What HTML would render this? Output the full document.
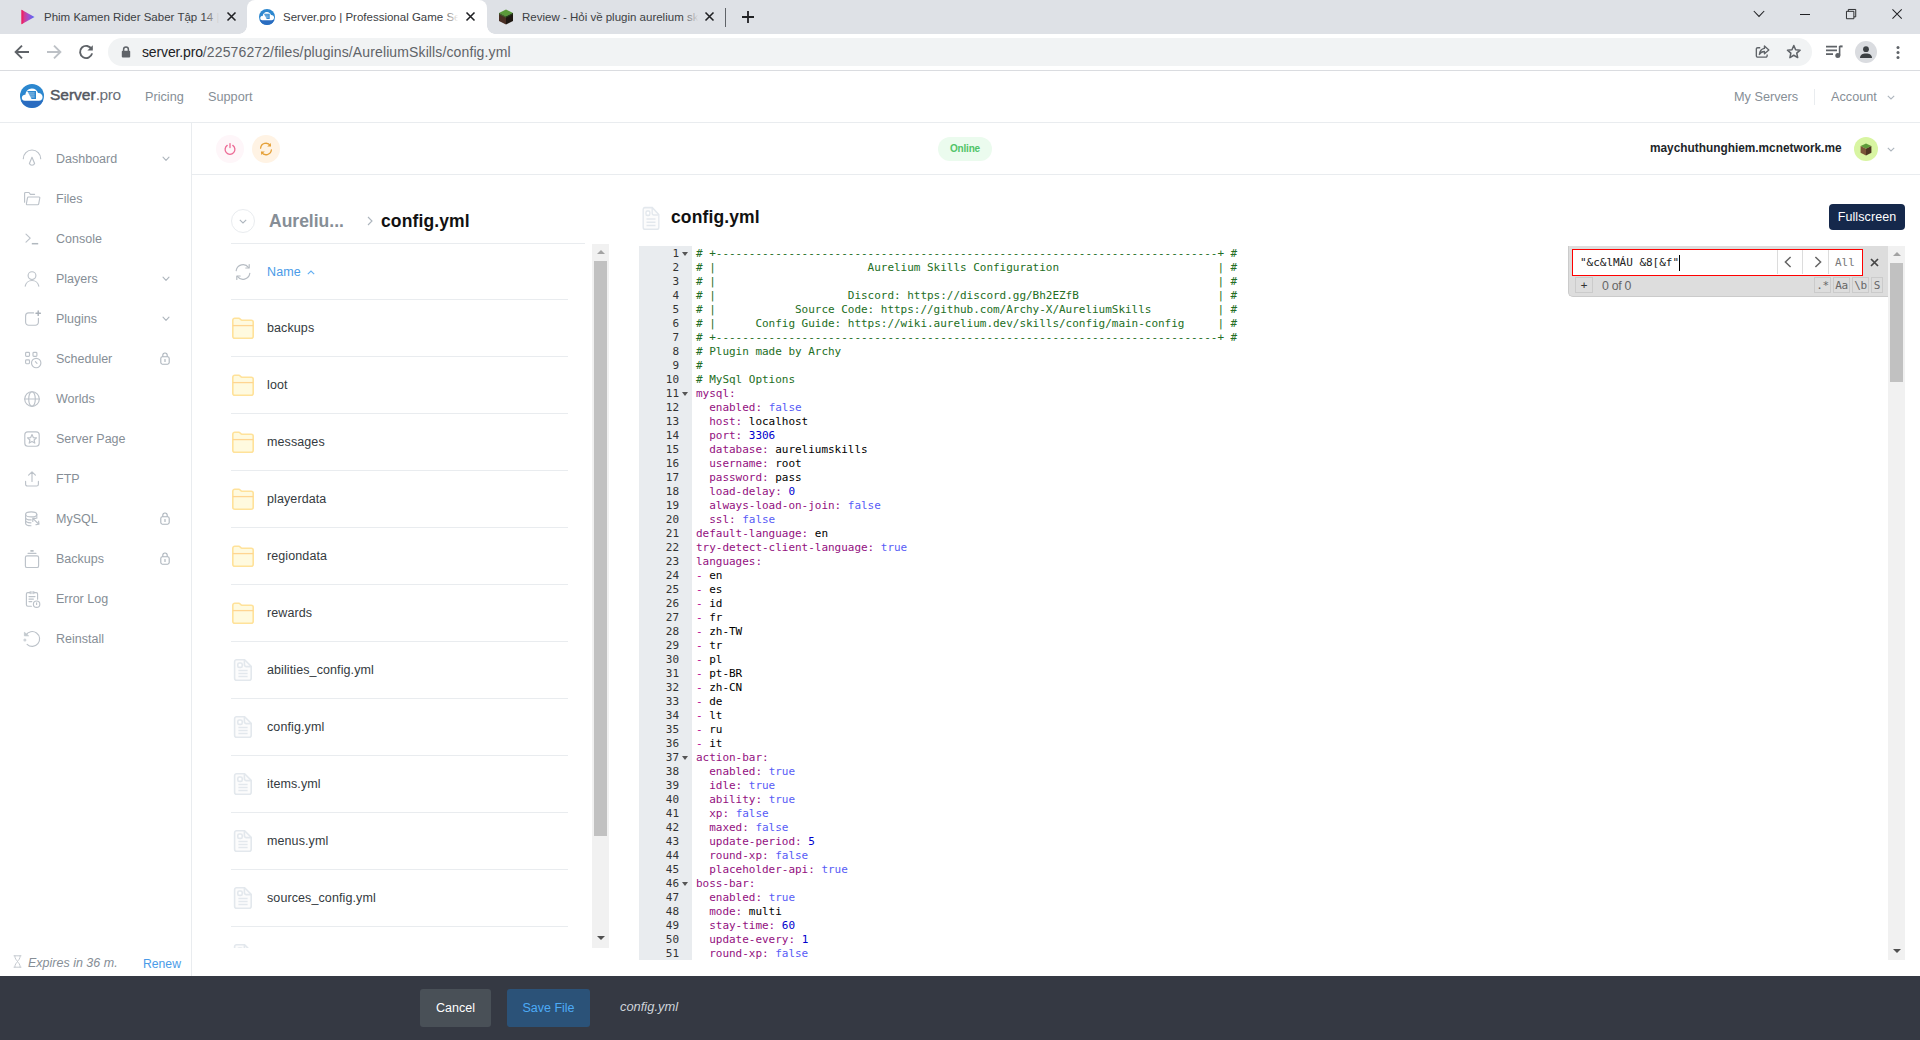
<!DOCTYPE html>
<html lang="en">
<head>
<meta charset="utf-8">
<title>Server.pro | Professional Game Server Hosting</title>
<style>
*{box-sizing:border-box;margin:0;padding:0}
html,body{width:1920px;height:1040px;overflow:hidden;background:#fff;font-family:"Liberation Sans",Arial,sans-serif;color:#212529}
.abs{position:absolute}
svg{display:block;overflow:visible}
/* ---------- browser chrome ---------- */
#tabstrip{position:absolute;left:0;top:0;width:1920px;height:34px;background:#dee1e6}
.tab{position:absolute;top:0;height:34px;font-size:11.5px;color:#3c4043;white-space:nowrap}
.tab .ttl{position:absolute;top:9px;height:16px;line-height:16px;overflow:hidden}
.tab .x{position:absolute;top:11px;width:11px;height:11px}
#tab2{left:247px;width:240px;background:#fff;border-radius:8px 8px 0 0}
#tab2:before,#tab2:after{content:"";position:absolute;bottom:0;width:8px;height:8px;background:radial-gradient(circle at 0 0,rgba(255,255,255,0) 7.5px,#fff 8px)}
#tab2:before{left:-8px}
#tab2:after{right:-8px;background:radial-gradient(circle at 100% 0,rgba(255,255,255,0) 7.5px,#fff 8px)}
.fade{position:absolute;top:6px;width:28px;height:22px}
#toolbar{position:absolute;left:0;top:34px;width:1920px;height:37px;background:#fff;border-bottom:1px solid #dadce0}
#omni{position:absolute;left:108px;top:4px;width:1704px;height:28px;border-radius:14px;background:#f1f3f4}
#url{position:absolute;left:34px;top:5px;font-size:14px;line-height:18px;color:#5f6368;letter-spacing:.12px;white-space:nowrap}
#url b{font-weight:400;color:#202124;letter-spacing:-.14px}
/* ---------- site header ---------- */
#hdr{position:absolute;left:0;top:71px;width:1920px;height:52px;background:#fff;border-bottom:1px solid #e9ecef}
.nav{position:absolute;top:18px;font-size:12.7px;line-height:16px;color:#868e96;white-space:nowrap}
/* ---------- sidebar ---------- */
#side{position:absolute;left:0;top:123px;width:192px;height:853px;border-right:1px solid #e9ecef;background:#fff}
.si{position:absolute;left:0;width:191px;height:40px}
.si .ic{position:absolute;left:22px;top:10px;width:20px;height:20px}
.si .tx{position:absolute;left:56px;top:11px;font-size:12.5px;line-height:18px;color:#868e96;white-space:nowrap}
.si .ch{position:absolute;left:162px;top:17px;width:8px;height:6px}
.si .lk{position:absolute;left:160px;top:13px;width:10px;height:13px}
/* ---------- server bar ---------- */
#sbar{position:absolute;left:192px;top:123px;width:1728px;height:52px;border-bottom:1px solid #e9ecef;background:#fff}
/* ---------- file list ---------- */
#fl{position:absolute;left:231px;top:244px;width:378px;height:704px;overflow:hidden}
.row{position:absolute;left:0;width:337px;height:57px;border-bottom:1px solid #e9ecef}
.row .fi{position:absolute;left:0;top:16px;width:24px;height:24px}
.row .nm{position:absolute;left:36px;top:19px;font-size:12.5px;line-height:18px;color:#343a40;white-space:nowrap;letter-spacing:.1px}
/* ---------- editor ---------- */
#ed{position:absolute;left:639px;top:246px;width:1266px;height:714px;background:#fff;overflow:hidden}
#gut{position:absolute;left:0;top:0;width:53px;height:714px;background:#e9ecef}
.mono{font-family:"DejaVu Sans Mono","Liberation Mono",monospace;font-size:11px;letter-spacing:-0.0226px}
#gut pre,#code pre{font-family:inherit;font-size:inherit;line-height:14px;height:14px;white-space:pre}
#gut pre{color:#333;text-align:right;width:40px;position:relative;top:1px}
#code{position:absolute;left:57px;top:1px}
.c{color:#236e24}.k{color:#930f80}.b{color:#585cf6}.n{color:#0000cd}.t{color:#000}.l{color:#b90690}
.fold{position:absolute;left:43px;width:0;height:0;border-left:3.5px solid transparent;border-right:3.5px solid transparent;border-top:4px solid #555}
.sb{top:31px;height:16px;border:1px solid #cbcbcb;font-family:"DejaVu Sans Mono","Liberation Mono",monospace;font-size:11px;line-height:16px;color:#666;text-align:center;letter-spacing:-.3px}
/* ---------- footer ---------- */
#foot{position:absolute;left:0;top:976px;width:1920px;height:64px;background:#353943}
</style>
</head>
<body>
<div id="tabstrip">
  <!-- tab 1 -->
  <div class="tab" style="left:8px;width:239px">
    <svg class="abs" style="left:12px;top:9px" width="16" height="16" viewBox="0 0 16 16"><defs><linearGradient id="pg" x1="0" y1="0" x2="1" y2="0"><stop offset="0" stop-color="#f0326e"/><stop offset=".55" stop-color="#a14fd0"/><stop offset="1" stop-color="#4a6cf7"/></linearGradient></defs><path d="M1.5 .8 L14.5 8 L1.5 15.2 Z" fill="url(#pg)"/><path d="M1.5 .8 L3.4 1.9 L3.4 14.1 L1.5 15.2 Z" fill="#e8246a"/></svg>
    <div class="ttl" style="left:36px;width:176px">Phim Kamen Rider Saber Tập 14 | Vietsub</div>
    <div class="fade" style="left:196px;width:18px;background:linear-gradient(90deg,rgba(222,225,230,0),#dee1e6 85%)"></div>
    <svg class="x" style="left:218px" viewBox="0 0 11 11"><path d="M1.5 1.5 L9.5 9.5 M9.5 1.5 L1.5 9.5" stroke="#202124" stroke-width="1.6" fill="none"/></svg>
  </div>
  <!-- tab 2 active -->
  <div class="tab" id="tab2">
    <svg class="abs" style="left:12px;top:9px" width="16" height="16" viewBox="0 0 24 24"><circle cx="12" cy="12" r="12" fill="#2c87cf"/><path d="M.95 16.6 A12 12 0 0 0 23.05 16.6 Z" fill="#2a6cc0"/><path d="M5 16.8 C2.6 16.8 1.6 14.9 1.9 13.2 C2.2 11.4 3.8 10.4 5.4 10.7 C5.8 7.2 8.4 4.4 11.8 4.4 C15 4.4 17.2 6.4 18 9 C20.6 8.8 22.6 10.6 22.6 12.9 C22.6 15.2 21 16.8 19 16.8 Z" fill="#fff"/><path d="M7.2 7 H16 V14.9 H11.6 Z" fill="#2c87cf"/><path d="M7 8.95 H14.6 M8 10.95 H14.6 M9 12.95 H14.6" stroke="#fff" stroke-width=".55"/></svg>
    <div class="ttl" style="left:36px;width:178px">Server.pro | Professional Game Server Hosting</div>
    <div class="fade" style="left:196px;width:18px;background:linear-gradient(90deg,rgba(255,255,255,0),#fff 85%)"></div>
    <svg class="x" style="left:218px" viewBox="0 0 11 11"><path d="M1.5 1.5 L9.5 9.5 M9.5 1.5 L1.5 9.5" stroke="#202124" stroke-width="1.6" fill="none"/></svg>
  </div>
  <!-- tab 3 -->
  <div class="tab" style="left:487px;width:239px">
    <svg class="abs" style="left:11px;top:9px" width="16" height="16" viewBox="0 0 16 16"><path d="M8 .6 L15 4 L8 7.6 L1 4 Z" fill="#5a9a3a"/><path d="M1 4 L8 7.6 V15.6 L1 12 Z" fill="#4a2f24"/><path d="M15 4 L8 7.6 V15.6 L15 12 Z" fill="#1f1812"/><path d="M1 4 L8 7.6 V8.8 L1 5.2 Z" fill="#3d6b2a"/><path d="M15 4 L8 7.6 V8.8 L15 5.2 Z" fill="#24401a"/></svg>
    <div class="ttl" style="left:35px;width:178px">Review - Hỏi về plugin aurelium skill</div>
    <div class="fade" style="left:196px;width:18px;background:linear-gradient(90deg,rgba(222,225,230,0),#dee1e6 85%)"></div>
    <svg class="x" style="left:217px" viewBox="0 0 11 11"><path d="M1.5 1.5 L9.5 9.5 M9.5 1.5 L1.5 9.5" stroke="#202124" stroke-width="1.6" fill="none"/></svg>
    <div class="abs" style="left:238px;top:8px;width:1px;height:19px;background:#5f6368"></div>
  </div>
  <svg class="abs" style="left:742px;top:11px" width="12" height="12" viewBox="0 0 12 12"><path d="M6 0 V12 M0 6 H12" stroke="#202124" stroke-width="1.8" fill="none"/></svg>
  <!-- window controls -->
  <svg class="abs" style="left:1753px;top:10px" width="12" height="8" viewBox="0 0 12 8"><path d="M.8 1 L6 6.4 L11.2 1" stroke="#202124" stroke-width="1.05" fill="none"/></svg>
  <div class="abs" style="left:1800px;top:14px;width:10px;height:1px;background:#202124"></div>
  <svg class="abs" style="left:1846px;top:9px" width="10.2" height="10.2" viewBox="0 0 11 11"><path d="M.5 2.5 H8.5 V10.5 H.5 Z M2.5 2.5 V.5 H10.5 V8.5 H8.5" stroke="#202124" stroke-width="1" fill="none"/></svg>
  <svg class="abs" style="left:1892px;top:9px" width="10.2" height="10.2" viewBox="0 0 11 11"><path d="M.5 .5 L10.5 10.5 M10.5 .5 L.5 10.5" stroke="#202124" stroke-width="1.1" fill="none"/></svg>
</div>
<div id="toolbar">
  <svg class="abs" style="left:14px;top:10px" width="16" height="16" viewBox="0 0 16 16"><path d="M15 8 H2.2 M8 1.6 L1.6 8 L8 14.4" stroke="#5f6368" stroke-width="1.9" fill="none"/></svg>
  <svg class="abs" style="left:46px;top:10px" width="16" height="16" viewBox="0 0 16 16"><path d="M1 8 H13.8 M8 1.6 L14.4 8 L8 14.4" stroke="#bdc1c6" stroke-width="1.9" fill="none"/></svg>
  <svg class="abs" style="left:78px;top:10px" width="16" height="16" viewBox="0 0 16 16"><path d="M13.6 5.2 A6.1 6.1 0 1 0 14.1 9.4" stroke="#5f6368" stroke-width="1.9" fill="none"/><path d="M14.8 1.2 V6.6 H9.4 Z" fill="#5f6368"/></svg>
  <div id="omni">
    <svg class="abs" style="left:13px;top:8px" width="10" height="12" viewBox="0 0 10 12"><path d="M2.6 5 V3.4 A2.4 2.4 0 0 1 7.4 3.4 V5" stroke="#5f6368" stroke-width="1.5" fill="none"/><rect x=".8" y="4.8" width="8.4" height="6.6" rx="1" fill="#5f6368"/></svg>
    <div id="url"><b>server.pro</b>/22576272/files/plugins/AureliumSkills/config.yml</div>
    <svg class="abs" style="left:1646.5px;top:7px" width="15.2" height="13.5" viewBox="0 0 18 16"><path d="M6.2 3.2 H3.2 A1.6 1.6 0 0 0 1.6 4.8 V12.8 A1.6 1.6 0 0 0 3.2 14.4 H12.8 A1.6 1.6 0 0 0 14.4 12.8 V11.4" stroke="#5f6368" stroke-width="1.6" fill="none"/><path d="M11.2 1.2 L16.4 5.8 L11.2 10.4 V7.7 C8.2 7.7 6.4 8.8 5.2 11.2 C5.6 7.4 7.6 4.6 11.2 4 Z" stroke="#5f6368" stroke-width="1.6" stroke-linejoin="round" fill="none"/></svg>
    <svg class="abs" style="left:1678px;top:6px" width="15.6" height="15.6" viewBox="0 0 18 18"><path d="M9 1.8 L11.1 6.6 L16.3 7.1 L12.4 10.6 L13.5 15.7 L9 13 L4.5 15.7 L5.6 10.6 L1.7 7.1 L6.9 6.6 Z" stroke="#5f6368" stroke-width="1.75" stroke-linejoin="round" fill="none"/></svg>
  </div>
  <svg class="abs" style="left:1825px;top:10px" width="18" height="16" viewBox="0 0 18 16"><path d="M1 2.6 H12 M1 6.4 H12 M1 10.2 H8" stroke="#5f6368" stroke-width="1.8" fill="none"/><path d="M14.6 2 V11.4" stroke="#5f6368" stroke-width="1.6" fill="none"/><path d="M14.6 1.4 H17.6 V3.4 H14.6 Z" fill="#5f6368"/><circle cx="12.8" cy="11.6" r="2.5" fill="#5f6368"/></svg>
  <div class="abs" style="left:1855px;top:7px;width:22px;height:22px;border-radius:11px;background:#dadce0"></div>
  <svg class="abs" style="left:1859px;top:11px" width="14" height="14" viewBox="0 0 14 14"><circle cx="7" cy="4.2" r="2.9" fill="#3c4043"/><path d="M1 13 C1 9.6 3.6 8.4 7 8.4 C10.4 8.4 13 9.6 13 13 Z" fill="#3c4043"/></svg>
  <svg class="abs" style="left:1896.4px;top:10px" width="4" height="16" viewBox="0 0 4 16"><circle cx="2" cy="3.5" r="1.5" fill="#5f6368"/><circle cx="2" cy="8.5" r="1.5" fill="#5f6368"/><circle cx="2" cy="13.5" r="1.5" fill="#5f6368"/></svg>
</div>

<div id="hdr">
  <svg class="abs" style="left:20px;top:13px" width="24" height="24" viewBox="0 0 24 24"><circle cx="12" cy="12" r="12" fill="#2c87cf"/><path d="M.95 16.6 A12 12 0 0 0 23.05 16.6 Z" fill="#2a6cc0"/><path d="M5 16.8 C2.6 16.8 1.6 14.9 1.9 13.2 C2.2 11.4 3.8 10.4 5.4 10.7 C5.8 7.2 8.4 4.4 11.8 4.4 C15 4.4 17.2 6.4 18 9 C20.6 8.8 22.6 10.6 22.6 12.9 C22.6 15.2 21 16.8 19 16.8 Z" fill="#fff"/><path d="M7.2 7 H16 V14.9 H11.6 Z" fill="#2c87cf"/><path d="M7 8.95 H14.6 M8 10.95 H14.6 M9 12.95 H14.6" stroke="#fff" stroke-width=".55"/></svg>
  <div class="abs" style="left:50px;top:13px;font-size:15.5px;line-height:22px;color:#54575f;white-space:nowrap"><span style="-webkit-text-stroke:.45px #54575f">Server</span><span style="color:#6b6f77;letter-spacing:-.4px">.pro</span></div>
  <div class="nav" style="left:145px">Pricing</div>
  <div class="nav" style="left:208px">Support</div>
  <div class="nav" style="left:1734px">My Servers</div>
  <div class="abs" style="left:1814px;top:18px;width:1px;height:16px;background:#e9ecef"></div>
  <div class="nav" style="left:1831px">Account</div>
  <svg class="abs" style="left:1887px;top:24px" width="8" height="5" viewBox="0 0 8 5"><path d="M.8 .8 L4 4 L7.2 .8" stroke="#adb5bd" stroke-width="1.1" fill="none"/></svg>
</div>

<!--SIDEBAR_S-->
<div id="side">
<div class="si" style="top:16px"><svg class="ic" viewBox="0 0 20 20"><path d="M1.3 9.7 A8.7 8.7 0 0 1 18.7 9.7" stroke="#bcc2c9" stroke-width="1.15" fill="none" stroke-linecap="round" stroke-linejoin="round"/><path d="M10 8.3 L7.4 14.5 A2.8 2.8 0 0 0 12.6 14.5 Z" stroke="#bcc2c9" stroke-width="1.15" fill="none" stroke-linecap="round" stroke-linejoin="round"/></svg><div class="tx">Dashboard</div><svg class="ch" viewBox="0 0 8 6"><path d="M1 1.2 L4 4.4 L7 1.2" stroke="#adb5bd" stroke-width="1.1" fill="none" stroke-linecap="round" stroke-linejoin="round"/></svg></div>
<div class="si" style="top:56px"><svg class="ic" viewBox="0 0 20 20"><path d="M2.6 13.2 V4.4 A.9 .9 0 0 1 3.5 3.5 H7 L8.4 5.3 H12.6" stroke="#bcc2c9" stroke-width="1.15" fill="none" stroke-linecap="round" stroke-linejoin="round"/><path d="M6.4 8 H17 A.8 .8 0 0 1 17.8 9 L16.7 14.9 A1 1 0 0 1 15.7 15.7 H5.2 A.8 .8 0 0 1 4.4 14.7 L5.5 8.8 A1 1 0 0 1 6.4 8 Z" stroke="#bcc2c9" stroke-width="1.15" fill="none" stroke-linecap="round" stroke-linejoin="round"/></svg><div class="tx">Files</div></div>
<div class="si" style="top:96px"><svg class="ic" viewBox="0 0 20 20"><path d="M4 5.2 L8.2 9.2 L4 13.2" stroke="#bcc2c9" stroke-width="1.15" fill="none" stroke-linecap="round" stroke-linejoin="round"/><path d="M9.8 14.7 H16.2" stroke="#b1b8bf" stroke-width="1.5" fill="none"/></svg><div class="tx">Console</div></div>
<div class="si" style="top:136px"><svg class="ic" viewBox="0 0 20 20"><circle cx="10" cy="6.6" r="3.9" stroke="#bcc2c9" stroke-width="1.15" fill="none" stroke-linecap="round" stroke-linejoin="round"/><path d="M3.2 17.2 A6.9 6.9 0 0 1 16.8 17.2" stroke="#bcc2c9" stroke-width="1.15" fill="none" stroke-linecap="round" stroke-linejoin="round"/></svg><div class="tx">Players</div><svg class="ch" viewBox="0 0 8 6"><path d="M1 1.2 L4 4.4 L7 1.2" stroke="#adb5bd" stroke-width="1.1" fill="none" stroke-linecap="round" stroke-linejoin="round"/></svg></div>
<div class="si" style="top:176px"><svg class="ic" viewBox="0 0 20 20"><path d="M11.6 3.9 H6.6 A3 3 0 0 0 3.6 6.9 V13.2 A3 3 0 0 0 6.6 16.2 H13.4 A3 3 0 0 0 16.4 13.2 V9.2" stroke="#bcc2c9" stroke-width="1.15" fill="none" stroke-linecap="round" stroke-linejoin="round"/><path d="M16.2 2 V6.4 M14 4.2 H18.4" stroke="#a9b0b8" stroke-width="1.4" fill="none" stroke-linecap="round"/></svg><div class="tx">Plugins</div><svg class="ch" viewBox="0 0 8 6"><path d="M1 1.2 L4 4.4 L7 1.2" stroke="#adb5bd" stroke-width="1.1" fill="none" stroke-linecap="round" stroke-linejoin="round"/></svg></div>
<div class="si" style="top:216px"><svg class="ic" viewBox="0 0 20 20"><rect x="3.6" y="3.4" width="3.9" height="3.9" rx=".9" stroke="#bcc2c9" stroke-width="1.15" fill="none" stroke-linecap="round" stroke-linejoin="round"/><rect x="11" y="3.4" width="3.9" height="3.9" rx=".9" stroke="#bcc2c9" stroke-width="1.15" fill="none" stroke-linecap="round" stroke-linejoin="round"/><rect x="3.6" y="10.8" width="3.9" height="3.9" rx=".9" stroke="#bcc2c9" stroke-width="1.15" fill="none" stroke-linecap="round" stroke-linejoin="round"/><circle cx="14.2" cy="14" r="4.7" fill="#fff" stroke="#bcc2c9" stroke-width="1.15"/><path d="M13.4 12.6 L15 14.4" stroke="#bcc2c9" stroke-width="1.15" fill="none" stroke-linecap="round" stroke-linejoin="round"/></svg><div class="tx">Scheduler</div><svg class="lk" viewBox="0 0 10 13"><rect x=".8" y="4.8" width="8.4" height="7.4" rx="1.6" stroke="#adb5bd" stroke-width="1.1" fill="none"/><path d="M2.8 4.8 V3.2 A2.2 2.2 0 0 1 7.2 3.2 V4.8" stroke="#adb5bd" stroke-width="1.1" fill="none"/><path d="M5 7.6 V9.4" stroke="#adb5bd" stroke-width="1.2" fill="none" stroke-linecap="round"/></svg></div>
<div class="si" style="top:256px"><svg class="ic" viewBox="0 0 20 20"><circle cx="10" cy="10" r="7.3" stroke="#bcc2c9" stroke-width="1.15" fill="none" stroke-linecap="round" stroke-linejoin="round"/><ellipse cx="10" cy="10" rx="3.3" ry="7.3" stroke="#bcc2c9" stroke-width="1.15" fill="none" stroke-linecap="round" stroke-linejoin="round"/><path d="M2.7 10 H17.3" stroke="#bcc2c9" stroke-width="1.15" fill="none" stroke-linecap="round" stroke-linejoin="round"/></svg><div class="tx">Worlds</div></div>
<div class="si" style="top:296px"><svg class="ic" viewBox="0 0 20 20"><rect x="2.8" y="2.8" width="14.4" height="14.4" rx="3" stroke="#bcc2c9" stroke-width="1.15" fill="none" stroke-linecap="round" stroke-linejoin="round"/><path d="M10 5.6 L11.3 8.6 L14.5 8.9 L12.1 11 L12.8 14.1 L10 12.5 L7.2 14.1 L7.9 11 L5.5 8.9 L8.7 8.6 Z" stroke="#bcc2c9" stroke-width="1.15" fill="none" stroke-linecap="round" stroke-linejoin="round"/></svg><div class="tx">Server Page</div></div>
<div class="si" style="top:336px"><svg class="ic" viewBox="0 0 20 20"><path d="M10 12.4 V3 M6.6 6.2 L10 2.8 L13.4 6.2" stroke="#bcc2c9" stroke-width="1.15" fill="none" stroke-linecap="round" stroke-linejoin="round"/><path d="M3.6 12.4 V15.2 A1.8 1.8 0 0 0 5.4 17 H14.6 A1.8 1.8 0 0 0 16.4 15.2 V12.4" stroke="#bcc2c9" stroke-width="1.15" fill="none" stroke-linecap="round" stroke-linejoin="round"/></svg><div class="tx">FTP</div></div>
<div class="si" style="top:376px"><svg class="ic" viewBox="0 0 20 20"><ellipse cx="9.2" cy="5.4" rx="5.6" ry="2.5" stroke="#bcc2c9" stroke-width="1.15" fill="none" stroke-linecap="round" stroke-linejoin="round"/><path d="M3.6 5.4 V14.2 C3.6 15.6 6 16.7 9 16.7 M3.6 8.4 C3.6 9.8 6 10.9 9.2 10.9 M3.6 11.3 C3.6 12.7 6 13.8 9 13.8 M14.8 5.4 V9.2" stroke="#bcc2c9" stroke-width="1.15" fill="none" stroke-linecap="round" stroke-linejoin="round"/><path d="M10.8 9.4 L16.6 15 M10.8 9.4 V12.4 M10.8 9.4 H13.8 M14 15.6 L17 15.2 L16.6 12.2" stroke="#bcc2c9" stroke-width="1.15" fill="none" stroke-linecap="round" stroke-linejoin="round"/></svg><div class="tx">MySQL</div><svg class="lk" viewBox="0 0 10 13"><rect x=".8" y="4.8" width="8.4" height="7.4" rx="1.6" stroke="#adb5bd" stroke-width="1.1" fill="none"/><path d="M2.8 4.8 V3.2 A2.2 2.2 0 0 1 7.2 3.2 V4.8" stroke="#adb5bd" stroke-width="1.1" fill="none"/><path d="M5 7.6 V9.4" stroke="#adb5bd" stroke-width="1.2" fill="none" stroke-linecap="round"/></svg></div>
<div class="si" style="top:416px"><svg class="ic" viewBox="0 0 20 20"><rect x="3.4" y="6.9" width="13.2" height="11.6" rx="1.6" stroke="#bcc2c9" stroke-width="1.15" fill="none" stroke-linecap="round" stroke-linejoin="round"/><path d="M6 4.3 H14" stroke="#bcc2c9" stroke-width="1.15" fill="none" stroke-linecap="round" stroke-linejoin="round"/><path d="M8.4 1.9 H11.6" stroke="#b1b8bf" stroke-width="1.6" fill="none"/></svg><div class="tx">Backups</div><svg class="lk" viewBox="0 0 10 13"><rect x=".8" y="4.8" width="8.4" height="7.4" rx="1.6" stroke="#adb5bd" stroke-width="1.1" fill="none"/><path d="M2.8 4.8 V3.2 A2.2 2.2 0 0 1 7.2 3.2 V4.8" stroke="#adb5bd" stroke-width="1.1" fill="none"/><path d="M5 7.6 V9.4" stroke="#adb5bd" stroke-width="1.2" fill="none" stroke-linecap="round"/></svg></div>
<div class="si" style="top:456px"><svg class="ic" viewBox="0 0 20 20"><path d="M8 3.6 H5.8 A1.4 1.4 0 0 0 4.4 5 V15.8 A1.4 1.4 0 0 0 5.8 17.2 H9.4 M12 3.6 H14.2 A1.4 1.4 0 0 1 15.6 5 V10.2" stroke="#bcc2c9" stroke-width="1.15" fill="none" stroke-linecap="round" stroke-linejoin="round"/><path d="M8.2 2.6 V4.6 M10 2.6 V4.6 M11.8 2.6 V4.6 M7 7.6 H13 M7 10.1 H11.4 M7 12.6 H9.8" stroke="#bcc2c9" stroke-width="1.15" fill="none" stroke-linecap="round" stroke-linejoin="round"/><circle cx="14.6" cy="15.2" r="3.2" fill="#fff" stroke="#bcc2c9" stroke-width="1.15"/><path d="M14.6 13.8 V15.5" stroke="#bcc2c9" stroke-width="1.15" fill="none" stroke-linecap="round" stroke-linejoin="round"/></svg><div class="tx">Error Log</div></div>
<div class="si" style="top:496px"><svg class="ic" viewBox="0 0 20 20"><path d="M3.9 6.1 A7.4 7.4 0 1 1 5.1 15.3" stroke="#bcc2c9" stroke-width="1.15" fill="none" stroke-linecap="round" stroke-linejoin="round"/><path d="M2.4 3.3 V6.8 H6.6 Z" fill="#c3c9ce" stroke="#c3c9ce" stroke-width=".8" stroke-linejoin="round"/><circle cx="2.9" cy="10.9" r="1.5" fill="#ced3d8"/></svg><div class="tx">Reinstall</div></div>
<svg class="abs" style="left:13px;top:832px" width="9" height="13" viewBox="0 0 9 13"><path d="M1 .8 H8 M1 12.2 H8 M1.8 .8 C1.8 4 3.6 5 4.5 6.5 C5.4 5 7.2 4 7.2 .8 M1.8 12.2 C1.8 9 3.6 8 4.5 6.5 C5.4 8 7.2 9 7.2 12.2" stroke="#c5cad0" stroke-width="1" fill="none" stroke-linecap="round"/></svg>
<div class="abs" style="left:28px;top:832px;font-size:12.5px;line-height:16px;font-style:italic;color:#868e96;white-space:nowrap" id="exp">Expires in 36 m.</div>
<div class="abs" style="left:143px;top:833px;font-size:12.2px;line-height:16px;color:#4a9be8;white-space:nowrap" id="renew">Renew</div>
</div>
<!--SIDEBAR_E-->
<!--SBAR_S-->
<div id="sbar">
  <div class="abs" style="left:24px;top:12px;width:28px;height:28px;border-radius:14px;background:#fef6f9"></div>
  <svg class="abs" style="left:32px;top:19px" width="12" height="13" viewBox="0 0 12 13"><path d="M3.2 3.4 A4.9 4.9 0 1 0 8.8 3.4" stroke="#ec6a95" stroke-width="1.3" fill="none" stroke-linecap="round"/><path d="M6 1.7 V5.6" stroke="#ec6a95" stroke-width="1.3" fill="none" stroke-linecap="round"/></svg>
  <div class="abs" style="left:60px;top:12px;width:28px;height:28px;border-radius:14px;background:#fff3e4"></div>
  <svg class="abs" style="left:67px;top:19px" width="14" height="14" viewBox="0 0 14 14"><path d="M1.6 6.2 A5.4 5.4 0 0 1 11.4 3.6" stroke="#e5a13a" stroke-width="1.3" fill="none" stroke-linecap="round"/><path d="M11.9 .9 V4.6 H8.2 Z" fill="#e5a13a"/><path d="M12.4 7.8 A5.4 5.4 0 0 1 2.6 10.4" stroke="#e5a13a" stroke-width="1.3" fill="none" stroke-linecap="round"/><path d="M2.1 13.1 V9.4 H5.8 Z" fill="#e5a13a"/></svg>
  <div class="abs" style="left:746px;top:14px;width:54px;height:24px;border-radius:12px;background:#ebfbee;color:#51c468;font-size:10px;font-weight:700;letter-spacing:-.2px;line-height:24px;text-align:center">Online</div>
  <div class="abs" id="sname" style="left:1458px;top:17px;font-size:11.85px;font-weight:700;line-height:16px;color:#212529;white-space:nowrap">maychuthunghiem.mcnetwork.me</div>
  <div class="abs" style="left:1662px;top:14px;width:24px;height:24px;border-radius:12px;background:#d8f5a2"></div>
  <svg class="abs" style="left:1668px;top:20px" width="12" height="13" viewBox="0 0 12 13"><path d="M6 .4 L11.4 3 L6 5.8 L.6 3 Z" fill="#5e9c3a"/><path d="M.6 3 L6 5.8 V12.6 L.6 9.8 Z" fill="#7a5537"/><path d="M11.4 3 L6 5.8 V12.6 L11.4 9.8 Z" fill="#4e3622"/></svg>
  <svg class="abs" style="left:1695px;top:24px" width="8" height="5" viewBox="0 0 8 5"><path d="M.8 .8 L4 4 L7.2 .8" stroke="#adb5bd" stroke-width="1.1" fill="none"/></svg>
</div>
<!--SBAR_E-->
<!--FILES_S-->
<div class="abs" style="left:231px;top:209px;width:24px;height:24px;border-radius:12px;border:1px solid #e9ecef"></div>
<svg class="abs" style="left:239px;top:219px" width="8" height="5" viewBox="0 0 8 5"><path d="M.8 .8 L4 4 L7.2 .8" stroke="#adb5bd" stroke-width="1.1" fill="none"/></svg>
<div class="abs" id="bc1" style="left:269px;top:210px;font-size:17.5px;font-weight:700;line-height:22px;color:#868e96;white-space:nowrap">Aureliu...</div>
<svg class="abs" style="left:367px;top:216px" width="6" height="10" viewBox="0 0 6 10"><path d="M1 1 L5 5 L1 9" stroke="#adb5bd" stroke-width="1.1" fill="none"/></svg>
<div class="abs" id="bc2" style="left:381px;top:210px;font-size:17.5px;letter-spacing:.12px;font-weight:700;line-height:22px;color:#111;white-space:nowrap">config.yml</div>
<div class="abs" style="left:231px;top:243px;width:354px;height:1px;background:#e9ecef"></div>
<div id="fl">
<div class="row" style="top:-1px"><svg class="abs" style="left:3px;top:20px" width="18" height="18" viewBox="0 0 18 18"><path d="M2.2 7.6 A6.9 6.9 0 0 1 14.6 4.6 M15.8 10.4 A6.9 6.9 0 0 1 3.4 13.4" stroke="#b7bdc4" stroke-width="1.2" fill="none" stroke-linecap="round"/><path d="M15.2 1.6 V5 H11.8 M2.8 16.4 V13 H6.2" stroke="#b7bdc4" stroke-width="1.2" fill="none" stroke-linecap="round" stroke-linejoin="round"/></svg>
<div class="nm" style="color:#4a9be8;top:20px">Name</div><svg class="abs" style="left:76px;top:27px" width="8" height="5" viewBox="0 0 8 5"><path d="M.8 4.2 L4 1 L7.2 4.2" stroke="#62aef2" stroke-width="1.1" fill="none"/></svg></div>
<div class="row" style="top:56px"><svg class="fi" viewBox="0 0 24 24"><path d="M1.8 4.2 A2 2 0 0 1 3.8 2.2 H7.8 C9.2 2.2 9.6 4.2 11 4.2 H20.2 A2 2 0 0 1 22.2 6.2 V20.2 A2 2 0 0 1 20.2 22.2 H3.8 A2 2 0 0 1 1.8 20.2 Z" fill="#fffadf" stroke="#ffe29a" stroke-width="1.6"/><path d="M1.8 9.6 H22.2" stroke="#ffd591" stroke-width="1.3"/></svg><div class="nm">backups</div></div>
<div class="row" style="top:113px"><svg class="fi" viewBox="0 0 24 24"><path d="M1.8 4.2 A2 2 0 0 1 3.8 2.2 H7.8 C9.2 2.2 9.6 4.2 11 4.2 H20.2 A2 2 0 0 1 22.2 6.2 V20.2 A2 2 0 0 1 20.2 22.2 H3.8 A2 2 0 0 1 1.8 20.2 Z" fill="#fffadf" stroke="#ffe29a" stroke-width="1.6"/><path d="M1.8 9.6 H22.2" stroke="#ffd591" stroke-width="1.3"/></svg><div class="nm">loot</div></div>
<div class="row" style="top:170px"><svg class="fi" viewBox="0 0 24 24"><path d="M1.8 4.2 A2 2 0 0 1 3.8 2.2 H7.8 C9.2 2.2 9.6 4.2 11 4.2 H20.2 A2 2 0 0 1 22.2 6.2 V20.2 A2 2 0 0 1 20.2 22.2 H3.8 A2 2 0 0 1 1.8 20.2 Z" fill="#fffadf" stroke="#ffe29a" stroke-width="1.6"/><path d="M1.8 9.6 H22.2" stroke="#ffd591" stroke-width="1.3"/></svg><div class="nm">messages</div></div>
<div class="row" style="top:227px"><svg class="fi" viewBox="0 0 24 24"><path d="M1.8 4.2 A2 2 0 0 1 3.8 2.2 H7.8 C9.2 2.2 9.6 4.2 11 4.2 H20.2 A2 2 0 0 1 22.2 6.2 V20.2 A2 2 0 0 1 20.2 22.2 H3.8 A2 2 0 0 1 1.8 20.2 Z" fill="#fffadf" stroke="#ffe29a" stroke-width="1.6"/><path d="M1.8 9.6 H22.2" stroke="#ffd591" stroke-width="1.3"/></svg><div class="nm">playerdata</div></div>
<div class="row" style="top:284px"><svg class="fi" viewBox="0 0 24 24"><path d="M1.8 4.2 A2 2 0 0 1 3.8 2.2 H7.8 C9.2 2.2 9.6 4.2 11 4.2 H20.2 A2 2 0 0 1 22.2 6.2 V20.2 A2 2 0 0 1 20.2 22.2 H3.8 A2 2 0 0 1 1.8 20.2 Z" fill="#fffadf" stroke="#ffe29a" stroke-width="1.6"/><path d="M1.8 9.6 H22.2" stroke="#ffd591" stroke-width="1.3"/></svg><div class="nm">regiondata</div></div>
<div class="row" style="top:341px"><svg class="fi" viewBox="0 0 24 24"><path d="M1.8 4.2 A2 2 0 0 1 3.8 2.2 H7.8 C9.2 2.2 9.6 4.2 11 4.2 H20.2 A2 2 0 0 1 22.2 6.2 V20.2 A2 2 0 0 1 20.2 22.2 H3.8 A2 2 0 0 1 1.8 20.2 Z" fill="#fffadf" stroke="#ffe29a" stroke-width="1.6"/><path d="M1.8 9.6 H22.2" stroke="#ffd591" stroke-width="1.3"/></svg><div class="nm">rewards</div></div>
<div class="row" style="top:398px"><svg class="fi" style="top:15px" viewBox="0 0 24 24"><path d="M5.6 2.8 H13.6 L20.2 9.4 V21.2 A2 2 0 0 1 18.2 23.2 H5.6 A2 2 0 0 1 3.6 21.2 V4.8 A2 2 0 0 1 5.6 2.8 Z" fill="#fcfcfc" stroke="#e3e8ed" stroke-width="1.6"/><path d="M13.4 3 V7.6 A2 2 0 0 0 15.4 9.6 H20" fill="none" stroke="#e3e8ed" stroke-width="1.6"/><rect x="6.8" y="6" width="4.4" height="4.4" rx="1.4" fill="#fff" stroke="#e3e8ed" stroke-width="1.6"/><path d="M7.4 13.6 H16.6 M7.4 16.6 H16.6 M7.4 19.6 H16.6" stroke="#e3e8ed" stroke-width="1.5"/></svg><div class="nm">abilities_config.yml</div></div>
<div class="row" style="top:455px"><svg class="fi" style="top:15px" viewBox="0 0 24 24"><path d="M5.6 2.8 H13.6 L20.2 9.4 V21.2 A2 2 0 0 1 18.2 23.2 H5.6 A2 2 0 0 1 3.6 21.2 V4.8 A2 2 0 0 1 5.6 2.8 Z" fill="#fcfcfc" stroke="#e3e8ed" stroke-width="1.6"/><path d="M13.4 3 V7.6 A2 2 0 0 0 15.4 9.6 H20" fill="none" stroke="#e3e8ed" stroke-width="1.6"/><rect x="6.8" y="6" width="4.4" height="4.4" rx="1.4" fill="#fff" stroke="#e3e8ed" stroke-width="1.6"/><path d="M7.4 13.6 H16.6 M7.4 16.6 H16.6 M7.4 19.6 H16.6" stroke="#e3e8ed" stroke-width="1.5"/></svg><div class="nm">config.yml</div></div>
<div class="row" style="top:512px"><svg class="fi" style="top:15px" viewBox="0 0 24 24"><path d="M5.6 2.8 H13.6 L20.2 9.4 V21.2 A2 2 0 0 1 18.2 23.2 H5.6 A2 2 0 0 1 3.6 21.2 V4.8 A2 2 0 0 1 5.6 2.8 Z" fill="#fcfcfc" stroke="#e3e8ed" stroke-width="1.6"/><path d="M13.4 3 V7.6 A2 2 0 0 0 15.4 9.6 H20" fill="none" stroke="#e3e8ed" stroke-width="1.6"/><rect x="6.8" y="6" width="4.4" height="4.4" rx="1.4" fill="#fff" stroke="#e3e8ed" stroke-width="1.6"/><path d="M7.4 13.6 H16.6 M7.4 16.6 H16.6 M7.4 19.6 H16.6" stroke="#e3e8ed" stroke-width="1.5"/></svg><div class="nm">items.yml</div></div>
<div class="row" style="top:569px"><svg class="fi" style="top:15px" viewBox="0 0 24 24"><path d="M5.6 2.8 H13.6 L20.2 9.4 V21.2 A2 2 0 0 1 18.2 23.2 H5.6 A2 2 0 0 1 3.6 21.2 V4.8 A2 2 0 0 1 5.6 2.8 Z" fill="#fcfcfc" stroke="#e3e8ed" stroke-width="1.6"/><path d="M13.4 3 V7.6 A2 2 0 0 0 15.4 9.6 H20" fill="none" stroke="#e3e8ed" stroke-width="1.6"/><rect x="6.8" y="6" width="4.4" height="4.4" rx="1.4" fill="#fff" stroke="#e3e8ed" stroke-width="1.6"/><path d="M7.4 13.6 H16.6 M7.4 16.6 H16.6 M7.4 19.6 H16.6" stroke="#e3e8ed" stroke-width="1.5"/></svg><div class="nm">menus.yml</div></div>
<div class="row" style="top:626px"><svg class="fi" style="top:15px" viewBox="0 0 24 24"><path d="M5.6 2.8 H13.6 L20.2 9.4 V21.2 A2 2 0 0 1 18.2 23.2 H5.6 A2 2 0 0 1 3.6 21.2 V4.8 A2 2 0 0 1 5.6 2.8 Z" fill="#fcfcfc" stroke="#e3e8ed" stroke-width="1.6"/><path d="M13.4 3 V7.6 A2 2 0 0 0 15.4 9.6 H20" fill="none" stroke="#e3e8ed" stroke-width="1.6"/><rect x="6.8" y="6" width="4.4" height="4.4" rx="1.4" fill="#fff" stroke="#e3e8ed" stroke-width="1.6"/><path d="M7.4 13.6 H16.6 M7.4 16.6 H16.6 M7.4 19.6 H16.6" stroke="#e3e8ed" stroke-width="1.5"/></svg><div class="nm">sources_config.yml</div></div>
<div class="row" style="top:683px"><svg class="fi" style="top:15px" viewBox="0 0 24 24"><path d="M5.6 2.8 H13.6 L20.2 9.4 V21.2 A2 2 0 0 1 18.2 23.2 H5.6 A2 2 0 0 1 3.6 21.2 V4.8 A2 2 0 0 1 5.6 2.8 Z" fill="#fcfcfc" stroke="#e3e8ed" stroke-width="1.6"/><path d="M13.4 3 V7.6 A2 2 0 0 0 15.4 9.6 H20" fill="none" stroke="#e3e8ed" stroke-width="1.6"/><rect x="6.8" y="6" width="4.4" height="4.4" rx="1.4" fill="#fff" stroke="#e3e8ed" stroke-width="1.6"/><path d="M7.4 13.6 H16.6 M7.4 16.6 H16.6 M7.4 19.6 H16.6" stroke="#e3e8ed" stroke-width="1.5"/></svg><div class="nm">stats.yml</div></div>
<div class="abs" style="left:361px;top:0;width:17px;height:704px;background:#f1f1f1"></div>
<div class="abs" style="left:363px;top:17px;width:13px;height:575px;background:#c1c1c1"></div>
<div class="abs" style="left:365.5px;top:6px;border-left:4px solid transparent;border-right:4px solid transparent;border-bottom:4.5px solid #a3a3a3"></div>
<div class="abs" style="left:365.5px;top:692px;border-left:4px solid transparent;border-right:4px solid transparent;border-top:4.5px solid #505050"></div>
</div>
<!--FILES_E-->
<!--EDITOR_S-->
<svg class="abs" style="left:641px;top:206px" width="20" height="24" viewBox="0 0 24 24" preserveAspectRatio="none"><path d="M5.6 1.6 H13.6 L21.4 8.6 V21.2 A2 2 0 0 1 19.4 23.2 H4.6 A2 2 0 0 1 2.6 21.2 V3.6 A2 2 0 0 1 4.6 1.6 Z" fill="#fcfcfc" stroke="#e3e8ed" stroke-width="1.6"/><path d="M13.4 2 V7 A2 2 0 0 0 15.4 9 H21" fill="none" stroke="#e3e8ed" stroke-width="1.6"/><rect x="6" y="5" width="4.6" height="4.4" rx="1.4" fill="#fff" stroke="#e3e8ed" stroke-width="1.6"/><path d="M6.6 13 H17.4 M6.6 16.2 H17.4 M6.6 19.4 H17.4" stroke="#e3e8ed" stroke-width="1.5"/></svg>
<div class="abs" id="edt" style="left:671px;top:206px;font-size:17.5px;letter-spacing:.12px;font-weight:700;line-height:22px;color:#111;white-space:nowrap">config.yml</div>
<div class="abs" id="fsb" style="left:1829px;top:204px;width:76px;height:26px;border-radius:4px;background:#15284b;color:#fff;font-size:12.5px;line-height:26px;text-align:center;letter-spacing:.1px">Fullscreen</div>
<div id="ed">
<div id="gut" class="mono"><pre>1</pre><pre>2</pre><pre>3</pre><pre>4</pre><pre>5</pre><pre>6</pre><pre>7</pre><pre>8</pre><pre>9</pre><pre>10</pre><pre>11</pre><pre>12</pre><pre>13</pre><pre>14</pre><pre>15</pre><pre>16</pre><pre>17</pre><pre>18</pre><pre>19</pre><pre>20</pre><pre>21</pre><pre>22</pre><pre>23</pre><pre>24</pre><pre>25</pre><pre>26</pre><pre>27</pre><pre>28</pre><pre>29</pre><pre>30</pre><pre>31</pre><pre>32</pre><pre>33</pre><pre>34</pre><pre>35</pre><pre>36</pre><pre>37</pre><pre>38</pre><pre>39</pre><pre>40</pre><pre>41</pre><pre>42</pre><pre>43</pre><pre>44</pre><pre>45</pre><pre>46</pre><pre>47</pre><pre>48</pre><pre>49</pre><pre>50</pre><pre>51</pre><div class="fold" style="top:6px"></div><div class="fold" style="top:146px"></div><div class="fold" style="top:510px"></div><div class="fold" style="top:636px"></div></div>
<div id="code" class="mono"><pre><span class="c"># +----------------------------------------------------------------------------+ #</span></pre><pre><span class="c"># |                       Aurelium Skills Configuration                        | #</span></pre><pre><span class="c"># |                                                                            | #</span></pre><pre><span class="c"># |                    Discord: https://discord.gg/Bh2EZfB                     | #</span></pre><pre><span class="c"># |            Source Code: https://github.com/Archy-X/AureliumSkills          | #</span></pre><pre><span class="c"># |      Config Guide: https://wiki.aurelium.dev/skills/config/main-config     | #</span></pre><pre><span class="c"># +----------------------------------------------------------------------------+ #</span></pre><pre><span class="c"># Plugin made by Archy</span></pre><pre><span class="c">#</span></pre><pre><span class="c"># MySql Options</span></pre><pre><span class="k">mysql:</span></pre><pre>  <span class="k">enabled:</span> <span class="b">false</span></pre><pre>  <span class="k">host:</span> <span class="t">localhost</span></pre><pre>  <span class="k">port:</span> <span class="n">3306</span></pre><pre>  <span class="k">database:</span> <span class="t">aureliumskills</span></pre><pre>  <span class="k">username:</span> <span class="t">root</span></pre><pre>  <span class="k">password:</span> <span class="t">pass</span></pre><pre>  <span class="k">load-delay:</span> <span class="n">0</span></pre><pre>  <span class="k">always-load-on-join:</span> <span class="b">false</span></pre><pre>  <span class="k">ssl:</span> <span class="b">false</span></pre><pre><span class="k">default-language:</span> <span class="t">en</span></pre><pre><span class="k">try-detect-client-language:</span> <span class="b">true</span></pre><pre><span class="k">languages:</span></pre><pre><span class="l">-</span><span class="t"> en</span></pre><pre><span class="l">-</span><span class="t"> es</span></pre><pre><span class="l">-</span><span class="t"> id</span></pre><pre><span class="l">-</span><span class="t"> fr</span></pre><pre><span class="l">-</span><span class="t"> zh-TW</span></pre><pre><span class="l">-</span><span class="t"> tr</span></pre><pre><span class="l">-</span><span class="t"> pl</span></pre><pre><span class="l">-</span><span class="t"> pt-BR</span></pre><pre><span class="l">-</span><span class="t"> zh-CN</span></pre><pre><span class="l">-</span><span class="t"> de</span></pre><pre><span class="l">-</span><span class="t"> lt</span></pre><pre><span class="l">-</span><span class="t"> ru</span></pre><pre><span class="l">-</span><span class="t"> it</span></pre><pre><span class="k">action-bar:</span></pre><pre>  <span class="k">enabled:</span> <span class="b">true</span></pre><pre>  <span class="k">idle:</span> <span class="b">true</span></pre><pre>  <span class="k">ability:</span> <span class="b">true</span></pre><pre>  <span class="k">xp:</span> <span class="b">false</span></pre><pre>  <span class="k">maxed:</span> <span class="b">false</span></pre><pre>  <span class="k">update-period:</span> <span class="n">5</span></pre><pre>  <span class="k">round-xp:</span> <span class="b">false</span></pre><pre>  <span class="k">placeholder-api:</span> <span class="b">true</span></pre><pre><span class="k">boss-bar:</span></pre><pre>  <span class="k">enabled:</span> <span class="b">true</span></pre><pre>  <span class="k">mode:</span> <span class="t">multi</span></pre><pre>  <span class="k">stay-time:</span> <span class="n">60</span></pre><pre>  <span class="k">update-every:</span> <span class="n">1</span></pre><pre>  <span class="k">round-xp:</span> <span class="b">false</span></pre></div>
<!--SEARCH_S-->
<div class="abs" id="srch" style="left:929px;top:0;width:320px;height:51px;background:#ddd;border:1px solid #cbcbcb;border-top:0;border-right:0;border-radius:0 0 0 5px">
  <div class="abs" style="left:3px;top:3px;width:291px;height:27px;background:#fff;border:1px solid #f00"></div>
  <div class="abs mono" id="stext" style="left:11px;top:10px;line-height:14px;color:#222;white-space:pre">"&amp;c&amp;lMÁU &amp;8[&amp;f"</div>
  <div class="abs" style="left:110px;top:9px;width:1px;height:16px;background:#000"></div>
  <div class="abs" style="left:208px;top:4px;width:1px;height:24px;background:#dcdcdc"></div>
  <div class="abs" style="left:233px;top:4px;width:1px;height:24px;background:#dcdcdc"></div>
  <div class="abs" style="left:259px;top:4px;width:1px;height:24px;background:#dcdcdc"></div>
  <svg class="abs" style="left:215px;top:10px" width="8" height="12" viewBox="0 0 8 12"><path d="M6.6 1 L1.4 6 L6.6 11" stroke="#656565" stroke-width="1.5" fill="none"/></svg>
  <svg class="abs" style="left:245px;top:10px" width="8" height="12" viewBox="0 0 8 12"><path d="M1.4 1 L6.6 6 L1.4 11" stroke="#656565" stroke-width="1.5" fill="none"/></svg>
  <div class="abs mono" style="left:266px;top:10px;line-height:14px;color:#7a7a7a;white-space:pre">All</div>
  <svg class="abs" style="left:301px;top:12px" width="9" height="9" viewBox="0 0 9 9"><path d="M1 1 L8 8 M8 1 L1 8" stroke="#444" stroke-width="1.7" fill="none"/></svg>
  <div class="abs" style="left:6px;top:31px;width:18px;height:16px;border:1px solid #cbcbcb"></div>
  <div class="abs mono" style="left:6px;top:33px;width:18px;text-align:center;line-height:14px;color:#333">+</div>
  <div class="abs" id="s00" style="left:33px;top:33px;font-size:12.3px;letter-spacing:-.3px;line-height:14px;color:#666;white-space:nowrap">0 of 0</div>
  <div class="abs sb" style="left:245px;width:17px">.*</div>
  <div class="abs sb" style="left:264px;width:17px">Aa</div>
  <div class="abs sb" style="left:283px;width:17px">\b</div>
  <div class="abs sb" style="left:302px;width:12px">S</div>
</div>
<!--SEARCH_E-->
<div class="abs" style="left:1249px;top:0;width:17px;height:714px;background:#f1f1f1"></div>
<div class="abs" style="left:1251px;top:17px;width:13px;height:119px;background:#c1c1c1"></div>
<div class="abs" style="left:1253.5px;top:6px;border-left:4px solid transparent;border-right:4px solid transparent;border-bottom:4.5px solid #a3a3a3"></div>
<div class="abs" style="left:1253.5px;top:703px;border-left:4px solid transparent;border-right:4px solid transparent;border-top:4.5px solid #505050"></div>
</div>
<!--EDITOR_E-->
<!--FOOTER_S-->
<div id="foot">
<div class="abs" id="bcancel" style="left:420px;top:13px;width:71px;height:38px;border-radius:3px;background:#495057;color:#fff;font-size:12.5px;line-height:38px;text-align:center">Cancel</div>
<div class="abs" id="bsave" style="left:507px;top:13px;width:83px;height:38px;border-radius:3px;background:#2b5278;color:#4dabf7;font-size:12.5px;line-height:38px;text-align:center">Save File</div>
<div class="abs" id="ffile" style="left:620px;top:23px;font-size:12.9px;font-style:italic;line-height:16px;color:#ced4da;white-space:nowrap">config.yml</div>
</div>
<!--FOOTER_E-->
</body>
</html>
